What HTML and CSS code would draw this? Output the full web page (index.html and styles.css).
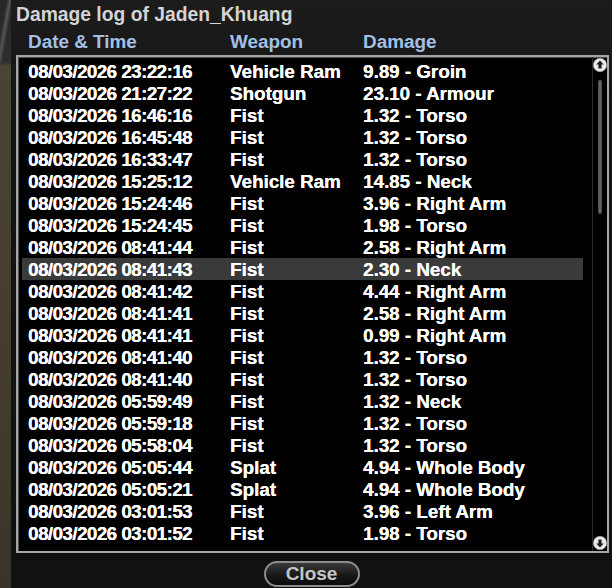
FILE: index.html
```html
<!DOCTYPE html>
<html>
<head>
<meta charset="utf-8">
<link rel="stylesheet" href="styles.css">
</head>
<body>
<div class="page">
  <div class="backdrop"></div>
  <div class="window">
    <div class="title">Damage log of Jaden_Khuang</div>
    <div class="cols head">
      <span>Date &amp; Time</span><span>Weapon</span><span>Damage</span>
    </div>
    <div class="listbox">
      <div class="rows">
        <div class="cols row"><span class="dt">08/03/2026 23:22:16</span><span>Vehicle Ram</span><span>9.89 - Groin</span></div>
        <div class="cols row"><span class="dt">08/03/2026 21:27:22</span><span>Shotgun</span><span>23.10 - Armour</span></div>
        <div class="cols row"><span class="dt">08/03/2026 16:46:16</span><span>Fist</span><span>1.32 - Torso</span></div>
        <div class="cols row"><span class="dt">08/03/2026 16:45:48</span><span>Fist</span><span>1.32 - Torso</span></div>
        <div class="cols row"><span class="dt">08/03/2026 16:33:47</span><span>Fist</span><span>1.32 - Torso</span></div>
        <div class="cols row"><span class="dt">08/03/2026 15:25:12</span><span>Vehicle Ram</span><span>14.85 - Neck</span></div>
        <div class="cols row"><span class="dt">08/03/2026 15:24:46</span><span>Fist</span><span>3.96 - Right Arm</span></div>
        <div class="cols row"><span class="dt">08/03/2026 15:24:45</span><span>Fist</span><span>1.98 - Torso</span></div>
        <div class="cols row"><span class="dt">08/03/2026 08:41:44</span><span>Fist</span><span>2.58 - Right Arm</span></div>
        <div class="cols row selected"><span class="dt">08/03/2026 08:41:43</span><span>Fist</span><span>2.30 - Neck</span></div>
        <div class="cols row"><span class="dt">08/03/2026 08:41:42</span><span>Fist</span><span>4.44 - Right Arm</span></div>
        <div class="cols row"><span class="dt">08/03/2026 08:41:41</span><span>Fist</span><span>2.58 - Right Arm</span></div>
        <div class="cols row"><span class="dt">08/03/2026 08:41:41</span><span>Fist</span><span>0.99 - Right Arm</span></div>
        <div class="cols row"><span class="dt">08/03/2026 08:41:40</span><span>Fist</span><span>1.32 - Torso</span></div>
        <div class="cols row"><span class="dt">08/03/2026 08:41:40</span><span>Fist</span><span>1.32 - Torso</span></div>
        <div class="cols row"><span class="dt">08/03/2026 05:59:49</span><span>Fist</span><span>1.32 - Neck</span></div>
        <div class="cols row"><span class="dt">08/03/2026 05:59:18</span><span>Fist</span><span>1.32 - Torso</span></div>
        <div class="cols row"><span class="dt">08/03/2026 05:58:04</span><span>Fist</span><span>1.32 - Torso</span></div>
        <div class="cols row"><span class="dt">08/03/2026 05:05:44</span><span>Splat</span><span>4.94 - Whole Body</span></div>
        <div class="cols row"><span class="dt">08/03/2026 05:05:21</span><span>Splat</span><span>4.94 - Whole Body</span></div>
        <div class="cols row"><span class="dt">08/03/2026 03:01:53</span><span>Fist</span><span>3.96 - Left Arm</span></div>
        <div class="cols row"><span class="dt">08/03/2026 03:01:52</span><span>Fist</span><span>1.98 - Torso</span></div>
      </div>
      <div class="scrollbar">
        <svg class="sbtn" width="14" height="14" viewBox="0 0 14 14"><circle cx="7" cy="7" r="6.7" fill="#ececec" stroke="#a0a0a0" stroke-width="0.6"/><polygon points="7,2.4 10.8,6.6 8.6,6.6 8.6,10.6 5.4,10.6 5.4,6.6 3.2,6.6" fill="#1e1e1e"/></svg>
        <div class="track"><div class="thumb"></div></div>
        <svg class="sbtn" width="14" height="14" viewBox="0 0 14 14"><circle cx="7" cy="7" r="6.7" fill="#ececec" stroke="#a0a0a0" stroke-width="0.6"/><polygon points="7,11.6 10.8,7.4 8.6,7.4 8.6,3.4 5.4,3.4 5.4,7.4 3.2,7.4" fill="#1e1e1e"/></svg>
      </div>
    </div>
    <div class="footer"><button class="close">Close</button></div>
  </div>
</div>
</body>
</html>
```
FILE: styles.css
```css
html, body {
  margin: 0;
  padding: 0;
  width: 612px;
  height: 588px;
  overflow: hidden;
  background: #111;
  font-family: "Liberation Sans", Arial, sans-serif;
  font-weight: bold;
}
.page {
  display: flex;
  width: 612px;
  height: 588px;
}
.backdrop {
  width: 11px;
  flex: none;
  background:
    linear-gradient(100deg, transparent 30%, #555 45%, transparent 60%) 0 0 / 11px 62px no-repeat,
    linear-gradient(#262626 0, #2e2e2e 62px, #4a4434 66px, #463f30 300px, #3a3428 588px);
}
.window {
  flex: 1;
  display: flex;
  flex-direction: column;
  padding: 4px 3px 0 5px;
  background: linear-gradient(#1c1c1c, #141414 120px, #121110);
}
.title {
  height: 22px;
  line-height: 22px;
  font-size: 19.3px;
  color: #d4d4d4;
}
.cols {
  display: grid;
  grid-template-columns: 202px 133px 1fr;
}
.head {
  margin-top: 6px;
  height: 20px;
  line-height: 20px;
  padding-left: 12px;
  font-size: 18.9px;
  color: #a4c0e6;
}
.listbox {
  margin-top: 3px;
  height: 498px;
  box-sizing: border-box;
  border: 2px solid #a6a6a6;
  box-shadow: inset 1px 1px 0 #4e4e4e;
  background: #000;
  display: flex;
}
.rows {
  flex: 1;
  padding: 3px 9px 0 4px;
}
.row {
  height: 20px;
  padding-top: 2px;
  line-height: 20px;
  padding-left: 6px;
  font-size: 18.8px;
  color: #fff;
  white-space: nowrap;
  text-shadow: 0.25px 0 0 #fff;
}
.row .dt {
  letter-spacing: -0.55px;
}
.row.selected {
  background: #3a3a3a;
}
.scrollbar {
  width: 14px;
  border-left: 1px solid #2c2c2c;
  display: flex;
  flex-direction: column;
  align-items: center;
  padding: 1px 0 1px;
}
.sbtn {
  display: block;
  flex: none;
}
.track {
  flex: 1;
  display: flex;
  justify-content: center;
  padding-top: 8px;
}
.thumb {
  width: 4px;
  height: 134px;
  border-radius: 2px;
  background: linear-gradient(90deg, #4a4a4a, #6a6a6a, #4a4a4a);
}
.footer {
  display: flex;
  justify-content: center;
  margin-top: 8px;
  padding-right: 2px;
}
.close {
  width: 96px;
  height: 26px;
  border: 2px solid #8c8c8c;
  border-radius: 13px;
  background: linear-gradient(#3a3a3a, #151515 60%, #0c0c0c);
  color: #c6c6c6;
  font-family: "Liberation Sans", Arial, sans-serif;
  font-weight: bold;
  font-size: 19px;
  line-height: 20px;
  padding: 0;
}
```
